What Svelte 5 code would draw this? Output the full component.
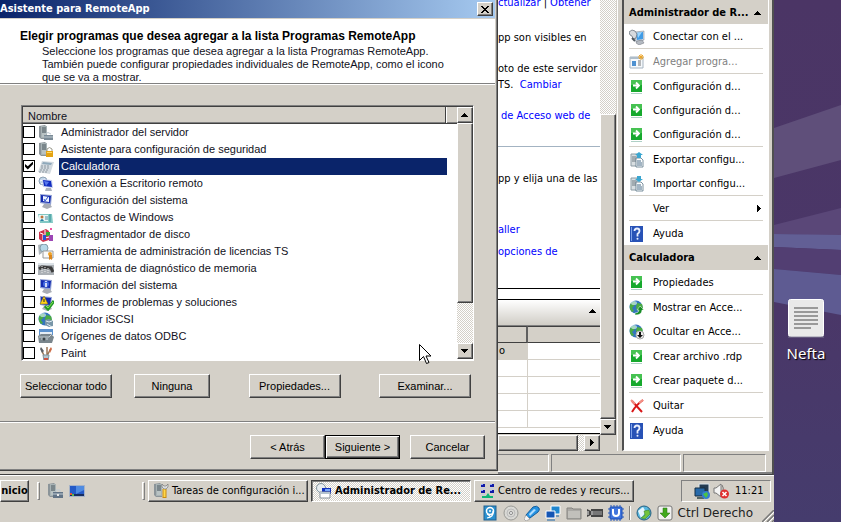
<script>
  let programs = $state([
    { name: 'Administrador del servidor', icon: 'server', checked: false },
    { name: 'Asistente para configuración de seguridad', icon: 'serverlock', checked: false },
    { name: 'Calculadora', icon: 'calc', checked: true },
    { name: 'Conexión a Escritorio remoto', icon: 'remote', checked: false },
    { name: 'Configuración del sistema', icon: 'monitor', checked: false },
    { name: 'Contactos de Windows', icon: 'contacts', checked: false },
    { name: 'Desfragmentador de disco', icon: 'defrag', checked: false },
    { name: 'Herramienta de administración de licencias TS', icon: 'license', checked: false },
    { name: 'Herramienta de diagnóstico de memoria', icon: 'memory', checked: false },
    { name: 'Información del sistema', icon: 'sysinfo', checked: false },
    { name: 'Informes de problemas y soluciones', icon: 'reports', checked: false },
    { name: 'Iniciador iSCSI', icon: 'iscsi', checked: false },
    { name: 'Orígenes de datos ODBC', icon: 'odbc', checked: false },
    { name: 'Paint', icon: 'paint', checked: false }
  ]);
  let selected = $state('Calculadora');

  const actionPanels = [
    {
      title: 'Administrador de R...',
      groups: [
        [{ text: 'Conectar con el ...', icon: 'connect' }],
        [{ text: 'Agregar progra...', icon: 'add', disabled: true }],
        [
          { text: 'Configuración d...', icon: 'go' },
          { text: 'Configuración d...', icon: 'go' },
          { text: 'Configuración d...', icon: 'go' }
        ],
        [
          { text: 'Exportar configu...', icon: 'export' },
          { text: 'Importar configu...', icon: 'import' }
        ],
        [{ text: 'Ver', submenu: true }],
        [{ text: 'Ayuda', icon: 'help' }]
      ]
    },
    {
      title: 'Calculadora',
      groups: [
        [{ text: 'Propiedades', icon: 'go' }],
        [
          { text: 'Mostrar en Acce...', icon: 'globeup' },
          { text: 'Ocultar en Acce...', icon: 'globedown' }
        ],
        [
          { text: 'Crear archivo .rdp', icon: 'go' },
          { text: 'Crear paquete d...', icon: 'go' }
        ],
        [{ text: 'Quitar', icon: 'remove' }],
        [{ text: 'Ayuda', icon: 'help' }]
      ]
    }
  ];

  const tasks = [
    { text: 'Tareas de configuración i...', icon: 'tasks' },
    { text: 'Administrador de Re...', icon: 'remoteapp', active: true },
    { text: 'Centro de redes y recurs...', icon: 'network' }
  ];
  const vmIcons = ['disk', 'cd', 'usb', 'screens', 'folder', 'camera', 'cpu'];
</script>

{#snippet arrow(dir)}
  <svg class="arrow" width="8" height="8" viewBox="0 0 8 8" shape-rendering="crispEdges" aria-hidden="true">
    {#if dir === 'up'}<path d="M0 6h7v-1h-1v-1h-1v-1h-1v-1h-1v1h-1v1h-1v1h-1z" />
    {:else if dir === 'down'}<path d="M0 2h7v1h-1v1h-1v1h-1v1h-1v-1h-1v-1h-1v-1h-1z" />
    {:else}<path d="M2 0v7h1v-1h1v-1h1v-1h1v-1h-1v-1h-1v-1h-1v-1z" />{/if}
  </svg>
{/snippet}

{#snippet tower()}
  <path d="M1 1l6-1 2 2v12H3l-2-2z" fill="#8b9499" /><path d="M3 1h6v12H3z" fill="#a8b3b5" />
  <path d="M4 3h4M4 5h4M4 7h4" stroke="#4e5b62" /><path d="M4 9h4M4 11h4" stroke="#c9d2d2" />
{/snippet}

{#snippet screen()}
  <path d="M4 3l10 1 1 8-10-1z" fill="#c7d0ee" /><path d="M5 4l8 1 1 6-8-1z" fill="#122dc0" />
  <path d="M6 5l5 1-3 4z" fill="#5778ee" /><path d="M8 12h5l1 3H7z" fill="#aab1bf" />
{/snippet}

{#snippet globe()}
  <circle cx="7" cy="7" r="6.5" fill="#3476bd" />
  <path d="M2 3q4-3 5 0L5 6 3 8l2 3-2 1Q-1 8 2 3M8 3l5 1 1 4-3 4-3-2-1-3z" fill="#4aab44" />
  <ellipse cx="5" cy="3" rx="3" ry="2" fill="#d7f0ff" opacity=".65" />
{/snippet}

{#snippet icon(name)}
  <svg class="icon" width="16" height="16" viewBox="0 0 16 16" aria-hidden="true">
    {#if name === 'server'}
      {@render tower()}<path d="M6 10h9v5H6z" fill="#7b8b97" /><path d="M7 9q3-3 6 0M6 12h9" fill="none" stroke="#bdc9cf" />
    {:else if name === 'serverlock'}
      {@render tower()}<path d="M9 9V7q2.500-3 5 0v2" fill="none" stroke="#9a9a8d" /><path d="M8 9h7v6H8z" fill="#e3a313" /><path d="M9 10h5v1H9z" fill="#ffd964" />
    {:else if name === 'calc'}
      <path d="M4 2l12 1-4 12-12-2z" fill="#d3dae0" /><path d="M5 3l9 1-1 2-9-1z" fill="#8fa9bb" />
      <path d="M3 7h9M3 9h9M2 11h9M1 13h9" stroke="#8b969f" stroke-dasharray="2 1" />
    {:else if name === 'remote'}
      <circle cx="5" cy="5" r="4" fill="#bfd5e7" stroke="#8da0b4" /><path d="M2 5l5-2M3 8l5-2" stroke="#fff" />{@render screen()}
    {:else if name === 'connect'}
      <path d="M6 3l9-1v9l-8 2z" fill="#d4dde6" stroke="#6c7b8a" stroke-width=".5" /><path d="M7 4l7-1v7l-6 1z" fill="#3f9be6" /><path d="M8 4l5-1-4 6z" fill="#9ad6ff" />
      <path d="M8 12l5-1 2 3-5 2-3-2z" fill="#b4bac2" stroke="#6c7078" stroke-width=".5" />
      <path d="M0 3l3-2 3 1 2 3-1 4-3 1-1-3-2-1z" fill="#d6dade" stroke="#5d6771" stroke-width=".7" /><path d="M3 9l3 3" stroke="#4c555d" stroke-width="2" />
    {:else if name === 'monitor' || name === 'sysinfo' || name === 'reports'}
      <path d="M2 1l12 1-1 10-11-2z" fill="#92a2d5" /><path d="M3 2l10 1-1 7-9-1z" fill="#142bb0" />
      <path d="M6 11h6l2 3-5 2-5-2z" fill="#a9adb5" />
      {#if name === 'monitor'}<path d="M5 3l6 1v5l-6-1z" fill="#eef3ff" /><path d="M6 6l1 2 3-4" fill="none" stroke="#2a55c8" />
      {:else if name === 'sysinfo'}<circle cx="8" cy="6" r="3" fill="#446ae0" /><path d="M8 3v1M8 5v4" stroke="#fff" stroke-width="1.500" />
      {:else}<path d="M6 1l4 8H2z" fill="#ffd31a" stroke="#79620d" stroke-width=".5" /><path d="M6 4v3" stroke="#222" /><path d="M7 11l3 3 6-8" fill="none" stroke="#239a25" stroke-width="3" /><path d="M8 11l2 2 5-6" fill="none" stroke="#8ae35c" />{/if}
    {:else if name === 'contacts'}
      <path d="M0 4h14l1 9H2z" fill="#82c8c4" /><path d="M1 5h9v6H1z" fill="#e9f7f5" /><circle cx="4" cy="7" r="1.500" fill="#bd713b" /><path d="M2 11q2-4 4 0z" fill="#2780a3" /><path d="M7 7h3M7 9h3" stroke="#538aa0" /><path d="M12 4v8" stroke="#338c96" />
    {:else if name === 'defrag'}
      <path d="M1 5l7-3 3 2v9l-6 2-4-3z" fill="#cd334d" /><path d="M2 6l3 1v6M7 3v8l4-1" fill="none" stroke="#fff" /><path d="M5 8h3v5H5z" fill="#2751d6" /><path d="M8 5h4v4H8z" fill="#36ac36" /><path d="M11 8h4v6h-4z" fill="#9c46b5" /><path d="M12 1h2v2h-2z" fill="#ed55a1" />
    {:else if name === 'license'}
      <path d="M0 1l4-1v9l-3 2z" fill="#aeb5ba" /><circle cx="6" cy="4" r="4" fill="#b6d8e7" stroke="#839daa" /><path d="M5 7h10v7H5z" fill="#fafafa" stroke="#999" /><circle cx="12" cy="10" r="2" fill="#eea228" /><path d="M11 11h3v5l-1.500-1L11 16z" fill="#db861b" />
    {:else if name === 'memory'}
      <path d="M0 2h16v12H0z" fill="#abb0b5" /><path d="M0 2h16v2H0z" fill="#dce2e7" /><path d="M1 8l3-2 9 1 2 4" fill="none" stroke="#3c3c3c" stroke-width="3" /><path d="M4 5v7M7 6v6M10 7v5" stroke="#ececec" stroke-dasharray="1 1" />
    {:else if name === 'iscsi'}
      {@render globe()}<path d="M7 8l4-1 4 2v5l-4 1-4-2z" fill="#7996a8" /><path d="M8 9l3 1 3-1M9 12l5 3" fill="none" stroke="#dceaf1" />
    {:else if name === 'odbc'}
      <path d="M1 0h14v6H1z" fill="#5b91cd" /><path d="M2 3h12v4H2z" fill="#e5edf4" /><path d="M0 7l3-2h10l3 3-2 6H1z" fill="#7a868d" /><path d="M1 8h10l2-2M3 10h7" fill="none" stroke="#c5d0d5" /><circle cx="6" cy="10" r="1.500" fill="#394348" />
    {:else if name === 'paint'}
      <path d="M4 5l3 7M12 4L8 12M9 1v11" fill="none" stroke="#9a7657" stroke-width="1.500" /><path d="M3 1l3 4-2 2-2-4z" fill="#5e6267" /><path d="M11 4l2-3 1 2-2 4z" fill="#cc6c47" /><path d="M5 9h6l-1 6H6z" fill="#b3c5ce" stroke="#7f939f" /><path d="M6 12h4v3H6z" fill="#cd5343" />
    {:else if name === 'go'}
      <path d="M2 1h11v12H2z" fill="#16a92d" /><path d="M2 1h11v5H2z" fill="#46c252" /><path d="M4 6.500h6M7 3.500l3 3-3 3" fill="none" stroke="#fff" stroke-width="1.800" /><path d="M2 14.500h11" stroke="#afd0c6" />
    {:else if name === 'add'}
      <path d="M1 3h13v11H1z" fill="#f6f9fc" stroke="#a7b4c1" /><path d="M1 3h13v2H1z" fill="#aebdca" /><path d="M3 7h4v5H3z" fill="#4e91d1" /><path d="M9 7h3M9 9h3M9 11h3" stroke="#777" /><path d="M12 0v6M9 3h6M10 1l4 4M14 1l-4 4" stroke="#eea526" />
    {:else if name === 'export' || name === 'import'}
      <path d="M2 2h6v12H2z" fill="#d8dee1" stroke="#8c9ba4" /><path d="M3 5h4M3 7h4M3 9h4" stroke="#6d7980" />
      <path d="M7 6h5l2 2v7H7z" fill="#fff" stroke="#587386" stroke-width=".8" /><path d="M8 9h4M8 11h5M8 13h5" stroke="#466a87" />
      {#if name === 'export'}<path d="M10 0l4 3h-2v3H8V3H6z" fill="#3aa6d0" />{:else}<path d="M8 0h4v3h2l-4 3-4-3h2z" fill="#3aa6d0" />{/if}
    {:else if name === 'help'}
      <path d="M1 0h13v16H1z" fill="#2852b6" /><path d="M2 1h1v14H2z" fill="#7ea3ea" /><path d="M5.500 5q0-2.500 2.500-2.500t2.500 2.500Q10.500 6.500 8.500 8v2.500" fill="none" stroke="#e8eefc" stroke-width="1.800" /><circle cx="8.500" cy="12.800" r="1" fill="#e8eefc" />
    {:else if name === 'globeup' || name === 'globedown'}
      {@render globe()}
      {#if name === 'globeup'}<path d="M6 13q4 0 4-3H8l3-4 4 4h-2q0 5-7 5z" fill="#158c25" stroke="#fff" stroke-width=".5" />
      {:else}<circle cx="11" cy="11" r="4" fill="#eee" stroke="#aaa" /><path d="M10 8h2v3h2l-3 3-3-3h2z" fill="#111" />{/if}
    {:else if name === 'remove'}
      <path d="M3 3l10 11M14 2Q7 7 3 14" fill="none" stroke="#d81717" stroke-width="2" /><path d="M2 2l4 4M14 2l-4 3" stroke="#f38f84" stroke-width="2" />
    {:else if name === 'tasks'}
      {@render tower()}<path d="M11.500 6v9" stroke="#c98a10" stroke-width="4" /><path d="M11.500 6v8" stroke="#ffd84a" stroke-width="2" /><path d="M9 1v3l2 2h2l2-2V1l-2 2h-2z" fill="#d9dcde" stroke="#6c6c6c" stroke-width=".6" />
    {:else if name === 'remoteapp'}
      <circle cx="5" cy="5" r="4.500" fill="#e8edf0" stroke="#81949e" /><path d="M6 5h9v6H6z" fill="#1232bd" /><path d="M9 6h5v2H9z" fill="#76a7fa" /><path d="M4 9h10v6H4z" fill="#fff" stroke="#86919a" /><path d="M4 9h10v2H4z" fill="#b5c3ce" />
    {:else if name === 'network'}
      <path d="M2 1h4v3H2zM11 1h4v3h-4zM2 7h4v3H2zM11 7h4v3h-4z" fill="#1019a7" /><path d="M2 1h2v1H2zM11 1h2v1h-2zM2 7h2v1H2zM11 7h2v1h-2z" fill="#91a9fb" /><path d="M2 5h5v1H2zM11 5h4v1h-4zM2 11h4v1H2z" fill="#c3cbe0" /><path d="M3 15h11v-2h-3l-2-3-2 3H3z" fill="#0fb775" />
    {:else if name === 'toolbox'}
      {@render tower()}<path d="M6 9h10v6H6z" fill="#627487" /><path d="M9 9V7h4v2M6 11h10" fill="none" stroke="#bfcbd3" /><path d="M10 11h2v2h-2z" fill="#e8e9ea" />
    {:else if name === 'desktop'}
      <path d="M0 2h16v12H0z" fill="#a6b3c8" /><path d="M1 3h14v9H1z" fill="#245ac7" /><path d="M7 3h8v4L7 11z" fill="#4f8be2" /><path d="M1 11h14v2H1z" fill="#172d60" /><path d="M1 10h2v2H1z" fill="#e15635" /><path d="M3 11h2v2H3z" fill="#59b850" />
    {:else if name === 'disk'}
      <rect x="2" y="1" width="12" height="14" fill="#2a90cf" stroke="#23618e" /><circle cx="8" cy="6" r="3.500" fill="none" stroke="#fff" stroke-width="1.500" /><circle cx="8" cy="6" r="1" fill="#fff" /><path d="M11 6q1 6-6 7M5 9l3 2" fill="none" stroke="#fff" stroke-width="1.200" />
    {:else if name === 'cd'}
      <circle cx="8" cy="8" r="7" fill="#d9d9d5" stroke="#9a9a96" /><circle cx="8" cy="8" r="4" fill="none" stroke="#bbb" /><circle cx="8" cy="8" r="1.500" fill="#fff" stroke="#888" />
    {:else if name === 'usb'}
      <path d="M3 13L2 10l7-8q4-2 6 1 1 2-1 4l-8 6z" fill="#2593e2" stroke="#155d9c" /><path d="M5 9l5-5 2 1-6 6z" fill="#b1ddff" /><path d="M2 10l4 4-4 2-2-2z" fill="#f4f4f4" stroke="#777" stroke-width=".5" />
    {:else if name === 'screens'}
      <path d="M6 1h9v8H6z" fill="#2086ce" stroke="#fff" /><path d="M1 6h9v7H1z" fill="#1455b4" stroke="#fff" /><path d="M2 15h8M11 11h3" stroke="#1a65a7" />
    {:else if name === 'folder'}
      <path d="M1 3h5l1 1h8v10H1z" fill="#aaa9a5" stroke="#858480" /><path d="M2 6h12v7H2z" fill="#c1c0bb" />
    {:else if name === 'camera'}
      <path d="M0 4l4 2V4h12v8H4v-2l-4 2z" fill="#454545" /><path d="M6 6h9v4H6z" fill="#777" /><path d="M1 6v4M5 6v4" stroke="#eee" />
    {:else if name === 'cpu'}
      <rect x="2" y="2" width="12" height="12" rx="1" fill="#4175dd" stroke="#164bb4" /><path d="M3 0v2M6 0v2M9 0v2M12 0v2M3 14v2M6 14v2M9 14v2M12 14v2M0 4h2M0 8h2M0 12h2M14 4h2M14 8h2M14 12h2" stroke="#2759bc" /><path d="M5 4v4q0 3 3 3t3-3V4" fill="none" stroke="#fff" stroke-width="2" />
    {:else if name === 'mouse'}
      <circle cx="8" cy="8" r="7" fill="#58b7df" stroke="#255f81" /><path d="M2 6l5-4 3 5-5 6z" fill="#e6f5fc" /><path d="M8 6l5-1 1 4-5 5-4-1 4-3z" fill="#72c33d" stroke="#33791c" stroke-width=".5" />
    {:else if name === 'key'}
      <rect x="1" y="1" width="14" height="14" rx="2" fill="#f1f1ef" stroke="#777" /><path d="M6 3h4v5h3l-5 5-5-5h3z" fill="#41a91d" stroke="#267014" stroke-width=".5" />
    {:else if name === 'traynet'}
      <path d="M5 1h10v9H5z" fill="#253c52" stroke="#dce6ee" /><path d="M1 5h10v8H1z" fill="#286aaa" stroke="#172e45" /><path d="M3 15h7" stroke="#566" stroke-width="2" /><circle cx="12" cy="12" r="4" fill="#337cd3" /><path d="M9 11l4-2 1 3-2 3z" fill="#4bc344" />
    {:else if name === 'volume'}
      <path d="M1 5h2l5-4v13L3 10H1z" fill="#f5f5f5" stroke="#777" /><path d="M9 2q2 3 1 6" fill="none" stroke="#777" /><circle cx="11.500" cy="11" r="4.500" fill="#df3030" /><path d="M9.500 9l4 4M13.500 9l-4 4" stroke="#fff" stroke-width="1.500" />
    {/if}
  </svg>
{/snippet}

<div class="host">
  <div class="vm">
    <div class="guest">
      <section class="dialog" aria-label="Asistente para RemoteApp">
        <header class="titlebar">
          <span>Asistente para RemoteApp</span>
          <button class="raised close" aria-label="Cerrar">
            <svg width="8" height="7" viewBox="0 0 8 7" shape-rendering="crispEdges"><path d="M0 0h2v1h1v1h2v-1h1v-1h2v1h-1v1h-1v1h-1v1h1v1h1v1h1v1h-2v-1h-1v-1h-2v1h-1v1h-2v-1h1v-1h1v-1h1v-1h-1v-1h-1v-1h-1z" /></svg>
          </button>
        </header>
        <div class="intro">
          <h1>Elegir programas que desea agregar a la lista Programas RemoteApp</h1>
          <p>Seleccione los programas que desea agregar a la lista Programas RemoteApp.<br />También puede configurar propiedades individuales de RemoteApp, como el icono<br />que se va a mostrar.</p>
        </div>
        <div class="body">
          <div class="list">
            <div class="list-main">
              <div class="list-head"><span>Nombre</span><i></i></div>
              <div class="rows">
                {#each programs as p}
                  <label class:selected={selected === p.name}>
                    <input type="checkbox" bind:checked={p.checked} onchange={() => (selected = p.name)} />
                    {@render icon(p.icon)}
                    <span>{p.name}</span>
                  </label>
                {/each}
              </div>
            </div>
            <div class="vscroll">
              <button class="raised sq" aria-label="Subir">{@render arrow('up')}</button>
              <div class="raised thumb"></div>
              <button class="raised sq" aria-label="Bajar">{@render arrow('down')}</button>
            </div>
          </div>
          <div class="list-buttons">
            <button class="raised wide">Seleccionar todo</button>
            <button class="raised">Ninguna</button>
            <button class="raised wide push">Propiedades...</button>
            <button class="raised wide push">Examinar...</button>
          </div>
        </div>
        <footer class="wizard">
          <button class="raised">&lt; Atrás</button>
          <button class="raised default">Siguiente &gt;</button>
          <button class="raised cancel">Cancelar</button>
        </footer>
      </section>

      <div class="console">
        <div class="panes">
          <div class="center">
            <div class="view">
              <div class="doc">
                <div class="copy">
                  <p class="cut"><a href="#actualizar">ctualizar</a> | <a href="#obtener">Obtener</a></p>
                  <p class="para">pp son visibles en</p>
                  <p class="para tight">oto de este servidor</p>
                  <p>TS.&nbsp; <a href="#cambiar">Cambiar</a></p>
                  <p class="para tight"><a class="inset" href="#acceso">de Acceso web de</a></p>
                  <hr />
                  <p>pp y elija una de las</p>
                  <p class="gap"><a href="#detalle">aller</a></p>
                  <p class="near"><a href="#opciones">opciones de</a></p>
                </div>
                <div class="band"></div>
                <div class="section">{@render arrow('up')}</div>
                <table>
                  <thead><tr><th scope="col" class="first" aria-label="Nombre"></th><th scope="col" aria-label="Ruta"></th></tr></thead>
                  <tbody>
                    <tr><td class="first marked">o</td><td></td></tr>
                    {#each Array(4) as _}<tr><td class="first"></td><td></td></tr>{/each}
                  </tbody>
                </table>
              </div>
              <div class="vscroll outer">
                <div class="track"></div>
                <div class="raised thumb"></div>
                <button class="raised sq" aria-label="Bajar">{@render arrow('down')}</button>
              </div>
            </div>
            <div class="hscroll">
              <div class="raised hthumb"></div>
              <button class="raised sq" aria-label="Derecha">{@render arrow('right')}</button>
            </div>
          </div>
          <aside class="actions">
            {#each actionPanels as panel}
              <h2><span>{panel.title}</span>{@render arrow('up')}</h2>
              {#each panel.groups as group}
                <ul>
                  {#each group as a}
                    <li>
                      <button class="action" disabled={a.disabled}>
                        {#if a.icon}{@render icon(a.icon)}{:else}<i class="blank"></i>{/if}
                        <span>{a.text}</span>
                        {#if a.submenu}{@render arrow('right')}{/if}
                      </button>
                    </li>
                  {/each}
                </ul>
              {/each}
            {/each}
          </aside>
        </div>
        <div class="console-status"><i></i><i></i><i></i></div>
      </div>
      <svg class="cursor" width="12" height="20" viewBox="0 0 12 20" aria-hidden="true"><path d="M.5.5v16l4-4 3 7 2.500-1-3-6.500h5z" fill="#fff" stroke="#000" /></svg>
    </div>

    <nav class="taskbar">
      <button class="raised start">nicio</button>
      <i class="grip"></i>
      <div class="quick">
        <button aria-label="Administrador del servidor">{@render icon('toolbox')}</button>
        <button aria-label="Mostrar escritorio">{@render icon('desktop')}</button>
      </div>
      <i class="grip"></i>
      {#each tasks as t}
        <button class="raised task" class:active={t.active}>{@render icon(t.icon)}<span>{t.text}</span></button>
      {/each}
      <div class="tray">{@render icon('traynet')}{@render icon('volume')}<time>11:21</time></div>
    </nav>

    <div class="vm-status">
      {#each vmIcons as name}{@render icon(name)}{/each}
      <i class="bar"></i>
      {@render icon('mouse')}{@render icon('key')}
      <span>Ctrl Derecho</span>
      <svg class="sizer" width="12" height="12" viewBox="0 0 12 12" aria-hidden="true"><path d="M0 12L12 0M5 12l7-7M10 12l2-2" stroke="#777" stroke-width="1.500" /><path d="M2 12L12 2M7 12l5-5" stroke="#fff" /></svg>
    </div>
  </div>

  <div class="desktop">
    <svg class="wallpaper" viewBox="0 0 67 522" preserveAspectRatio="none" aria-hidden="true">
      <defs>
        <linearGradient id="base" x1="0" y1="0" x2="0" y2="1"><stop offset="0" stop-color="#4b3565" /><stop offset=".6" stop-color="#4a3768" /><stop offset="1" stop-color="#453c6d" /></linearGradient>
      </defs>
      <path d="M0 0h67v522H0z" fill="url(#base)" />
      <path d="M0 128L67 105V160L0 178z" fill="#5f4f7a" />
      <path d="M0 225L67 208V236L0 234z" fill="#5a4778" />
      <path d="M0 234L67 235V250L0 247z" fill="#625f95" />
      <path d="M0 247L67 250V275L0 269z" fill="#523e72" />
      <path d="M0 269L67 275V315L0 302z" fill="#5e5b92" />
    </svg>
    <button class="shortcut">
      <svg width="38" height="40" viewBox="0 0 38 40" aria-hidden="true">
        <rect x="1.500" y="1.500" width="35" height="37" rx="2" fill="#e9e9e9" stroke="#fff" /><path d="M1 39h36" stroke="#7d7890" />
        <path d="M7 10h24M7 14h24M7 18h24M7 22h24M7 26h24M7 30h17" stroke="#999" stroke-width="2" />
      </svg>
      <span>Nefta</span>
    </button>
  </div>
</div>

<style>
  :global(body) { margin: 0; }
  .host { --face: #d4d0c8; --ui: "DejaVu Sans Condensed", "DejaVu Sans", sans-serif; --dlg: "Liberation Sans", Arial, sans-serif;
    display: flex; min-height: 100vh; font: 11px/16px var(--ui); color: #000; }
  .host * { box-sizing: border-box; }
  button { margin: 0; padding: 0; border: 0; background: none; font: inherit; color: inherit; }
  p, h1, h2, ul { margin: 0; padding: 0; }
  svg { display: block; flex: none; }
  .vm { flex: 1; min-width: 0; display: flex; flex-direction: column; background: var(--face); }
  .guest { position: relative; flex: 1; display: flex; border-bottom: 1px solid #404040; border-right: 2px solid #505050; }
  .raised { background: var(--face); border: 1px solid; border-color: #fff #404040 #404040 #fff; box-shadow: inset -1px -1px #808080; }
  .sq { width: 16px; height: 16px; flex: none; display: grid; place-items: center; }

  .dialog { flex: 0 0 498px; align-self: flex-start; display: flex; flex-direction: column; margin-bottom: 3px; padding-right: 2px;
    border-right: 1px solid #404040; border-bottom: 1px solid #404040; box-shadow: inset -1px -1px #808080; font-family: var(--dlg); }
  .titlebar { height: 18px; display: flex; align-items: center; justify-content: space-between; padding-right: 2px;
    background: linear-gradient(90deg, #0a246a, #a6caf0); color: #fff; font: bold 11px/18px var(--ui); }
  .close { width: 16px; height: 14px; display: grid; place-items: center; }
  .intro { height: 65px; margin-top: 1px; padding: 9px 20px 0; background: #fff; border-bottom: 1px solid #808080; box-shadow: 0 1px #fff; line-height: 13px; }
  h1 { font-size: 12px; line-height: 17px; white-space: nowrap; }
  .intro p { padding-left: 22px; color: #112; }
  .body { padding: 21px 24px 23px 20px; }
  .list { display: flex; height: 256px; margin: 0 -3px 0 1px; border: 1px solid; border-color: #808080 #fff #fff #808080; box-shadow: inset 1px 1px #404040; padding: 1px 0 1px 1px; background: #fff; }
  .list-main { flex: 1; min-width: 0; }
  .list-head { height: 17px; display: flex; background: var(--face); border-bottom: 1px solid #404040; box-shadow: inset 0 -1px #808080; padding-right: 10px; color: #112; line-height: 18px; }
  .list-head span { flex: 1; padding-left: 5px; }
  .list-head i { width: 2px; border-left: 1px solid #404040; border-right: 1px solid #fff; }
  .rows { height: 236px; overflow: hidden; }
  .rows label { display: flex; align-items: center; height: 17px; color: #112; }
  .rows span { flex: 1; margin: 0 10px 0 5px; padding-left: 2px; line-height: 17px; }
  .rows .selected span { background: #0a246a; color: #fff; }
  input { appearance: none; width: 12px; height: 12px; margin: 0 3px 2px 0; border: 1px solid #000; background: #fff; display: grid; place-items: center; }
  input:checked::before { content: ""; width: 8px; height: 8px; background: #000; clip-path: polygon(0 30%, 35% 60%, 100% 0, 100% 35%, 35% 100%, 0 65%); }
  .vscroll { width: 16px; display: flex; flex-direction: column; background: repeating-conic-gradient(#fff 0 25%, #d4d0c8 0 50%) 0 0 / 2px 2px; }
  .vscroll .thumb { flex: 0 0 180px; margin-bottom: auto; }
  .list-buttons { display: flex; margin-top: 13px; }
  .list-buttons button { width: 76px; height: 24px; }
  .list-buttons .wide { width: 92px; }
  .list-buttons button:nth-child(2) { margin-left: 22px; }
  .list-buttons .push { margin-left: auto; }
  .wizard { display: flex; justify-content: flex-end; border-top: 1px solid #808080; box-shadow: inset 0 1px #fff; padding: 13px 10px 11px; }
  .wizard button { width: 75px; height: 24px; }
  .wizard .default { border-color: #000; box-shadow: inset 1px 1px #fff, inset -1px -1px #404040, inset -2px -2px #808080; }
  .wizard .cancel { margin-left: 10px; }
  .cursor { position: absolute; left: 419px; top: 344px; }

  .console { flex: 1; min-width: 0; display: flex; flex-direction: column; border-bottom: 2px solid #808080; padding-right: 3px; }
  .panes { flex: 1; display: flex; }
  .center { flex: 1; min-width: 0; display: flex; flex-direction: column; }
  .view { flex: 1; display: flex; }
  .doc { flex: 1; min-width: 0; overflow: hidden; background: #fff; border-bottom: 1px solid #000; height: 434px; }
  .copy { height: 289px; border-bottom: 1px solid #000; white-space: nowrap; overflow: hidden; }
  .copy a { color: #00f; text-decoration: none; }
  .copy .cut { margin-top: -5px; }
  .copy .para { margin-top: 19px; }
  .copy .tight { margin-top: 15px; }
  .copy .gap { margin-top: 35px; }
  .copy .near { margin-top: 6px; }
  .copy .inset { padding-left: 3px; }
  hr { margin: 22px 0 24px; border: 0; height: 1px; background: #a3b3c2; }
  .band { height: 11px; border-bottom: 1px solid #000; }
  .section { height: 26px; display: flex; align-items: center; justify-content: flex-end; padding: 0 3px 4px 0; background: linear-gradient(#fff, #d0cdc6); border-bottom: 1px solid #808080; }
  table { width: 100%; border-collapse: separate; border-spacing: 0; table-layout: fixed; }
  th { height: 17px; padding: 0; background: var(--face); border-bottom: 1px solid #404040; border-top: 1px solid #404040; }
  th.first { border-right: 2px solid #606060; }
  td { height: 17px; padding: 0 3px 0 1px; border-bottom: 1px solid var(--face); line-height: 16px; }
  .first { width: 30px; }
  td.first { border-right: 1px solid var(--face); }
  .marked { background: var(--face); }
  .outer .track { height: 114px; }
  .outer .thumb { flex: 1; margin: 0; }
  .hscroll { display: flex; height: 16px; margin-right: 16px; background: repeating-conic-gradient(#fff 0 25%, #d4d0c8 0 50%) 0 0 / 2px 2px; }
  .hthumb { flex: 1; margin-right: 6px; }
  .actions { flex: 0 0 147px; margin-left: 6px; background: #fff; border-left: 2px solid #505050; border-right: 1px solid #fff; border-bottom: 1px solid #fff; padding-bottom: 8px; box-shadow: -4px 0 var(--face), -5px 0 #fff; }
  h2 { display: flex; justify-content: space-between; align-items: center; height: 25px; padding: 1px 6px 0 5px; background: var(--face); font-size: 11px; white-space: nowrap; }
  h2:first-child { height: 24px; }
  ul { list-style: none; margin: 0 5px; }
  ul + ul { border-top: 1px solid var(--face); }
  .action { display: flex; align-items: center; width: 100%; height: 24px; padding-top: 1px; text-align: left; white-space: nowrap; }
  .action span { flex: 1; margin-left: 8px; }
  .action:disabled { color: #808080; }
  .blank { width: 16px; }
  .console-status { display: flex; gap: 2px; height: 21px; padding: 3px 3px 0 0; }
  .console-status i { flex: 0 0 83px; border: 1px solid; border-color: #808080 #fff #fff #808080; }
  .console-status i:first-child { flex: 0 0 51px; border-left: 0; }
  .console-status i:nth-child(2) { flex: 1; }

  .taskbar { display: flex; height: 28px; padding: 4px 3px 1px 0; border-top: 1px solid #fff; align-items: stretch; }
  .start { width: 29px; font-weight: bold; }
  .grip { width: 3px; margin: 2px 0 2px 8px; border: 1px solid; border-color: #fff #808080 #808080 #fff; }
  .quick { display: flex; gap: 6px; align-items: center; width: 102px; padding-left: 7px; margin-right: -8px; }
  .task { flex: 0 1 160px; display: flex; align-items: center; gap: 3px; padding-left: 4px; margin-left: 3px; white-space: nowrap; overflow: hidden; }
  .task.active { font-weight: bold; border-color: #404040 #fff #fff #404040; box-shadow: inset 1px 1px #808080; background: repeating-conic-gradient(#fff 0 25%, #d4d0c8 0 50%) 0 0 / 2px 2px; }
  .tray { margin-left: auto; width: 90px; display: flex; align-items: center; gap: 3px; padding-left: 12px; border: 1px solid; border-color: #808080 #fff #fff #808080; }
  .tray time { margin-left: 3px; }
  .vm-status { display: flex; align-items: center; justify-content: flex-end; gap: 5px; height: 19px; overflow: hidden; font: 12px/16px "DejaVu Sans", sans-serif; color: #222; }
  .bar { width: 2px; height: 14px; border-left: 1px solid #808080; border-right: 1px solid #fff; }
  .sizer { align-self: flex-end; margin-left: 4px; }

  .desktop { position: relative; flex: 0 0 67px; display: flex; flex-direction: column; align-items: center; padding-top: 298px; background: #4a3768; }
  .wallpaper { position: absolute; inset: 0; width: 100%; height: 100%; }
  .shortcut { position: relative; display: flex; flex-direction: column; align-items: center; gap: 5px; margin-right: 3px; color: #fff; font: 15px/20px "Noto Sans", sans-serif; text-shadow: 1px 1px 1px #000; }
</style>
